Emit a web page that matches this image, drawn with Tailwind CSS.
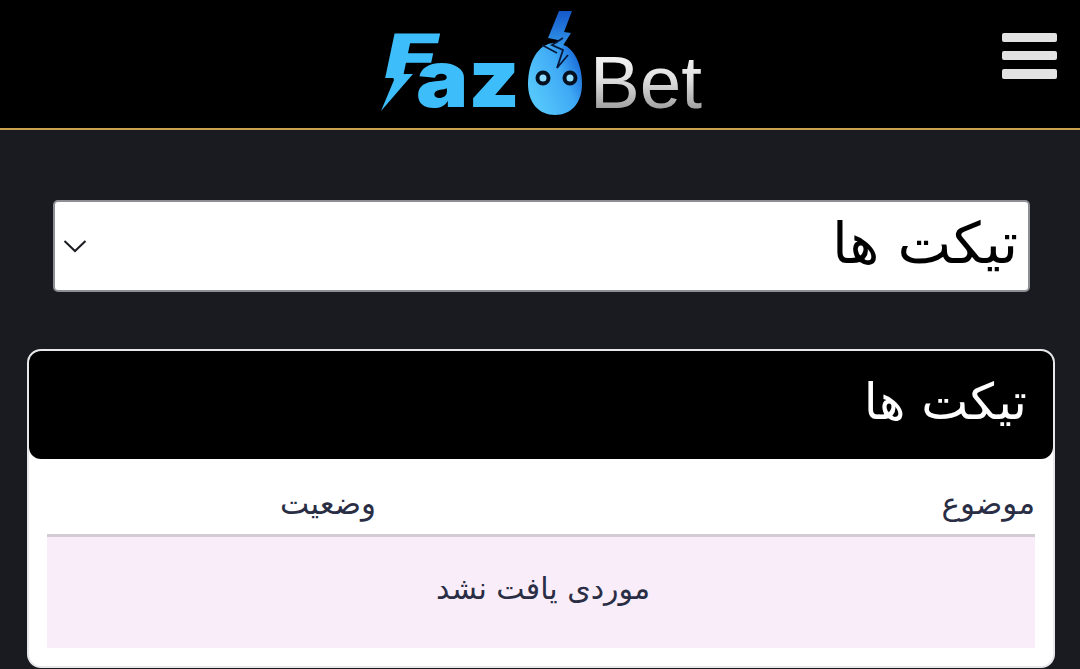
<!DOCTYPE html>
<html lang="fa" dir="rtl">
<head>
    <meta charset="UTF-8">
    <meta name="viewport" content="width=device-width, initial-scale=1.0">
    <title>FazoBet - تیکت ها</title>
    <script src="https://cdn.jsdelivr.net/npm/@tailwindcss/browser@4"></script>
</head>
<body class="bg-[#1a1b21] font-['DejaVu_Sans',sans-serif] h-[669px] overflow-hidden">
    <!-- Header -->
    <header dir="ltr" class="grid grid-cols-[1fr_360px_1fr] items-start h-[130px] bg-black border-b-2 border-[#c9a24f]">
        <div></div>
        <svg width="360" height="128" viewBox="360 0 360 128">
            <defs>
                <linearGradient id="betFill" x1="0" y1="0" x2="0" y2="1">
                    <stop offset="0" stop-color="#ffffff"/>
                    <stop offset="0.45" stop-color="#e2e2e2"/>
                    <stop offset="1" stop-color="#808080"/>
                </linearGradient>
                <linearGradient id="eggFill" x1="0.1" y1="0.7" x2="0.95" y2="0.2">
                    <stop offset="0" stop-color="#55c6fb"/>
                    <stop offset="0.6" stop-color="#3fa9f5"/>
                    <stop offset="1" stop-color="#1769d8"/>
                </linearGradient>
                <linearGradient id="boltFill" x1="0" y1="0" x2="0" y2="1">
                    <stop offset="0" stop-color="#1557c9"/>
                    <stop offset="1" stop-color="#3db2f7"/>
                </linearGradient>
            </defs>
            <!-- F with its lightning tail -->
            <polygon points="392,74 413,74 381,111 394,80" fill="#3dbdf9"/>
            <text x="381" y="78" transform="skewX(-12)" transform-origin="381 78" font-family="Inter" font-weight="900" font-size="61" fill="#3dbdf9" textLength="52" lengthAdjust="spacingAndGlyphs">F</text>
            <text x="416" y="107" font-family="Inter" font-weight="900" font-size="80" fill="#3dbdf9" textLength="104" lengthAdjust="spacingAndGlyphs">az</text>
            <!-- mascot -->
            <path d="M555,43 C572,43 582,62 582,84 C582,103 571,115 555,115 C539,115 528,103 528,84 C528,62 538,43 555,43 Z" fill="url(#eggFill)"/>
            <polygon points="559,11 572,11 564,32 571,33 553,61 558,40 548,38" fill="url(#boltFill)"/>
            <polyline points="542,45 557,53" fill="none" stroke="#06183a" stroke-width="1.5"/>
            <polyline points="563,38 552,45 563,50 557,68 568,55" fill="none" stroke="#06183a" stroke-width="1.8"/>
            <circle cx="543" cy="78" r="5.5" fill="#8fdcff" stroke="#04101f" stroke-width="4"/>
            <circle cx="570" cy="78" r="5.5" fill="#8fdcff" stroke="#04101f" stroke-width="4"/>
            <text x="590" y="108" font-family="Liberation Sans" font-size="75" fill="url(#betFill)" textLength="112" lengthAdjust="spacingAndGlyphs">Bet</text>
        </svg>
        <button class="justify-self-end mt-[33px] mr-[23px] w-[55px] flex flex-col gap-[9px]">
            <span class="block h-[9px] rounded-[2px] bg-[#e2e2e2]"></span>
            <span class="block h-[9px] rounded-[2px] bg-[#e2e2e2]"></span>
            <span class="block h-[10px] rounded-[2px] bg-[#e2e2e2]"></span>
        </button>
    </header>

    <main class="pt-[70px] pl-[27px] pr-[25px]">
        <!-- Section select -->
        <div class="ml-[26px] mr-[25px] h-[92px] flex items-center justify-between bg-white border-2 border-[#8d8f94] rounded-[5px] pr-[10px] pl-[8px]">
            <span class="text-[57px] leading-none text-black pb-[6px]">تیکت ها</span>
            <svg width="24" height="14" viewBox="0 0 24 14" fill="none" stroke="#1a1c22" stroke-width="2"><path d="M1.5 2 L12 12 L22.5 2"/></svg>
        </div>

        <!-- Tickets card -->
        <section class="mt-[57px] bg-white border-2 border-[#e8e8ea] rounded-[14px] overflow-hidden h-[319px]">
            <h2 class="h-[108px] flex items-center bg-black text-white text-[50px] leading-none font-normal pr-[26px] pb-[6px] rounded-b-[12px]">تیکت ها</h2>
            <div class="px-[18px]">
                <table class="w-full text-[#2a2e45] text-[31px] border-collapse">
                    <thead>
                        <tr class="h-[76px] border-b-[3px] border-[#d3cbd3]">
                            <th class="w-[659px] pt-[14px] font-normal text-right">موضوع</th>
                            <th class="pt-[14px] font-normal text-right">وضعیت</th>
                        </tr>
                    </thead>
                    <tbody>
                        <tr class="h-[113px] bg-[#f9edf9]">
                            <td colspan="2" class="text-center text-[30px] pl-[4px] pb-[8px]">موردی یافت نشد</td>
                        </tr>
                    </tbody>
                </table>
            </div>
        </section>
    </main>
</body>
</html>
